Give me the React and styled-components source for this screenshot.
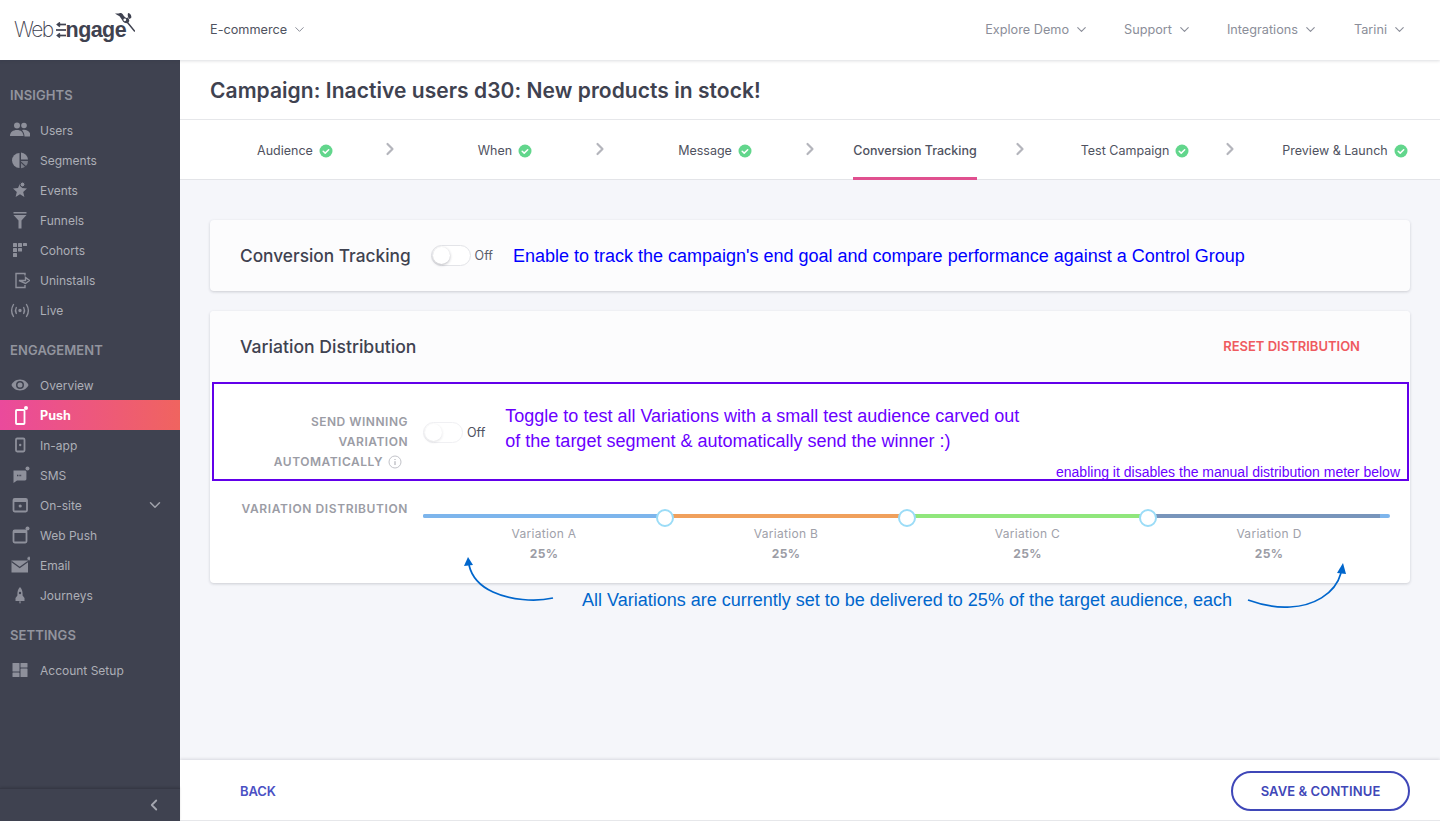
import React from "react";
import styled, { createGlobalStyle } from "styled-components";
import { ChevronDown, ChevronRight, ChevronLeft } from "lucide-react";

const Global = createGlobalStyle`
  html, body { margin: 0; padding: 0; height: 100%; }
  body { font-family: Inter, "Noto Sans", "Liberation Sans", sans-serif; background: #f5f6fa; overflow: hidden; }
  * { box-sizing: border-box; }
`;

const Page = styled.div`
  width: 1440px; height: 821px; display: grid;
  grid-template-rows: 60px 1fr; grid-template-columns: 180px 1fr; overflow: hidden;
`;
const TopBar = styled.header`
  grid-column: 1 / 3; display: flex; align-items: center; background: #fff;
  padding: 0 33px 2px 0; box-shadow: 0 1px 3px rgba(40, 44, 60, 0.16); position: relative; z-index: 2;
`;
const Logo = styled.div`
  width: 210px; display: flex; align-items: baseline; padding: 18px 0 0 14px; height: 58px; position: relative; color: #3f4250;
`;
const LogoThin = styled.span`
  font-family: Inter, sans-serif; font-size: 21px; font-weight: 200; letter-spacing: -1.6px; line-height: 24px; color: #3f4250;
`;
const LogoBold = styled.span`
  font-family: "Liberation Sans", sans-serif; font-size: 21.5px; font-weight: 700; letter-spacing: -0.55px; line-height: 24px;
`;
const LogoMark = styled.svg`
  width: 10px; height: 16px; align-self: flex-start; margin: 4px 0 0 3px; flex: none;
`;
const Bird = styled.svg`
  position: absolute; left: 115px; top: 12px; width: 20px; height: 20px;
`;
const MenuButton = styled.div`
  display: flex; align-items: center; gap: 5px; font-size: 12.7px; letter-spacing: 0;
  color: ${p => (p.$dark ? "#4f5260" : "#8b8e99")};
  margin-left: ${p => p.$gap || 0}px;
`;
const Spacer = styled.div` flex: 1; `;

const Side = styled.aside`
  background: #3f4250; display: flex; flex-direction: column; padding-top: 20px; position: relative;
`;
const SideLabel = styled.div`
  font-size: 13px; font-weight: 600; color: #92949e; letter-spacing: 0.1px; line-height: 30px;
  padding-left: 10px; margin: ${p => (p.$first ? "0" : "10px")} 0 5px;
`;
const SideRow = styled.div`
  height: 30px; display: flex; align-items: center; gap: 10px; padding: 0 16px 0 10px;
  font-size: ${p => (p.$active ? "12.6px" : "12px")}; color: ${p => (p.$active ? "#fff" : "#adafb7")}; font-weight: ${p => (p.$active ? 700 : 400)};
  background: ${p => (p.$active ? "linear-gradient(90deg, #ea4a9c, #f0645f)" : "none")};
`;
const SideIcon = styled.svg`
  width: 20px; height: 20px; flex: none; color: ${p => (p.$active ? "#fff" : "#8e909b")};
`;
const SideText = styled.span` flex: 1; `;
const Collapse = styled.div`
  margin-top: auto; height: 33px; border-top: 1px solid #363845; box-shadow: 0 -1px 2px rgba(0,0,0,.12);
  display: flex; align-items: center; justify-content: flex-end; padding-right: 17px; color: #a4a6af;
`;

const Main = styled.main` display: flex; flex-direction: column; min-width: 0; min-height: 0; background: #f5f6fa; `;
const TitleBar = styled.div`
  height: 60px; flex: none; background: #fff; padding: 1px 0 0 30px; display: flex; align-items: center;
  border-bottom: 1px solid #e6e7ea;
`;
const Title = styled.h1` margin: 0; font-size: 21px; font-weight: 600; color: #3f4250; letter-spacing: 0.05px; `;
const Steps = styled.nav`
  height: 60px; flex: none; background: #fff; display: grid; grid-template-columns: repeat(6, 210px);
  border-bottom: 1px solid #e3e4e8;
`;
const Step = styled.div`
  position: relative; display: flex; align-items: center; justify-content: center; font-size: 12.5px; color: #4f5260;
`;
const StepLabel = styled.span`
  position: relative; height: 60px; line-height: 61px; white-space: nowrap;
  font-weight: ${p => (p.$active ? 500 : 400)};
  border-bottom: ${p => (p.$active ? "3px solid #e0508f" : "0")};
`;
const Check = styled.svg`
  position: absolute; left: calc(100% + 6px); top: 24px; width: 14px; height: 14px;
`;
const StepArrow = styled(ChevronRight)`
  position: absolute; right: -10px; top: 19px; color: #b4b5bc;
`;
const Content = styled.div`
  flex: 1; padding: 40px 30px 0; display: flex; flex-direction: column; gap: 20px; min-height: 0;
`;
const Card = styled.section`
  background: ${p => (p.$tint ? "#fcfcfd" : "#fff")}; border-radius: 4px; box-shadow: 0 1px 3px rgba(40, 44, 60, 0.2);
`;
const TrackingCard = styled(Card)`
  height: 71px; display: flex; align-items: center; padding-left: 30px;
`;
const CardTitle = styled.h2` margin: 0; font-size: 17.3px; font-weight: 500; color: #3f4250; letter-spacing: 0; `;
const SectionTitle = styled(CardTitle)` font-size: 17.6px; `;
const Toggle = styled.div`
  width: 40px; height: 21px; border-radius: 11px; border: 1px solid ${p => (p.$pale ? "#f0f0f3" : "#e3e4e8")}; background: #fff; position: relative; flex: none;
  margin-left: ${p => p.$ml || 0}px;
  &::before {
    content: ""; position: absolute; left: 1px; top: 1px; width: 17px; height: 17px; border-radius: 50%;
    background: #fff; box-shadow: 0 1px 3px rgba(30, 30, 50, ${p => (p.$pale ? 0.14 : 0.32)});
  }
`;
const OffText = styled.span` font-size: 12.5px; color: ${p => p.$c || "#5b5e6b"}; margin-left: ${p => p.$ml || 4}px; `;
const BlueNote = styled.span`
  font-family: "Liberation Sans", Arial, sans-serif; font-size: 18px; color: #0000ff; margin: 1px 0 0 20px; white-space: nowrap;
`;
const HeaderRow = styled.div`
  height: 71px; display: flex; align-items: center; justify-content: space-between; padding: 0 50px 0 30px; background: #fcfcfd; border-radius: 4px 4px 0 0;
`;
const Reset = styled.span` font-size: 13px; font-weight: 600; color: #ef5a5f; letter-spacing: 0; margin-bottom: 2px; `;
const WinnerBox = styled.div`
  position: relative; height: 99px; margin: 0 1px 0 2px; border: 2px solid #6200ea;
  display: flex; align-items: flex-start; padding-top: 28px;
`;
const FieldLabel = styled.div`
  width: 194px; flex: none; text-align: right; font-size: 12px; font-weight: 600; letter-spacing: 0.5px; line-height: 20px; color: #9b9ca5; text-transform: uppercase; white-space: nowrap;
`;
const InfoIcon = styled.svg` width: 14px; height: 14px; vertical-align: -3px; margin: 0 6px 0 5px; `;
const WinnerToggle = styled.div` display: flex; align-items: center; margin: 10px 0 0 15px; height: 21px; `;
const PurpleNote = styled.div`
  font-family: "Liberation Sans", Arial, sans-serif; font-size: 18px; line-height: 25px; color: #6a00ff; width: 530px; margin: -8px 0 0 20px;
`;
const PurpleSmall = styled.div`
  position: absolute; right: 7px; bottom: -1px; font-family: "Liberation Sans", Arial, sans-serif; font-size: 14px; line-height: 16px; color: #6a00ff;
`;
const SliderRow = styled.div`
  height: 102px; display: flex; padding: 18px 20px 0 30px;
`;
const SliderLabel = styled(FieldLabel)` width: 168px; letter-spacing: 0.6px; `;
const SliderCol = styled.div` flex: 1; margin-left: 15px; padding-top: 15px; `;
const Track = styled.div`
  height: 4px; border-radius: 2px; background: #7db5ec; display: grid; grid-template-columns: 242px 242px 241px 232px;
  width: 967px;
`;
const Segment = styled.div`
  height: 4px; position: relative; background: ${p => p.$c}; border-radius: 2px 0 0 2px;
  ${p => p.$handle && `&::after {
    content: ""; position: absolute; right: -9px; top: -5px; width: 14px; height: 14px; border-radius: 50%;
    background: #fff; border: 2px solid #9bdcf7; z-index: 1;
  }`}
`;
const SegmentLabels = styled.div`
  display: grid; grid-template-columns: 242px 242px 241px 242px; margin-top: 6px; text-align: center; color: #a0a1aa; font-size: 12px; line-height: 20px; letter-spacing: 0.3px;
`;
const Percent = styled.div` font-weight: 700; color: #9b9ca5; `;
const BottomNote = styled.div`
  position: relative; margin-top: 6px; font-family: "Liberation Sans", Arial, sans-serif; font-size: 18px; line-height: 22px; color: #0066cc; padding-left: 372px;
`;
const ArrowSvg = styled.svg` position: absolute; overflow: visible; left: ${p => p.$x}px; top: ${p => p.$y}px; `;
const Footer = styled.footer`
  height: 61px; flex: none; background: #fff; display: flex; align-items: center; justify-content: space-between;
  padding: 1px 30px 0 60px; box-shadow: 0 -1px 3px rgba(40, 44, 60, 0.14); border-bottom: 1px solid #e6e7ea;
`;
const BackLink = styled.span` font-size: 13px; font-weight: 600; color: #4a50c4; letter-spacing: -0.1px; `;
const SaveButton = styled.button`
  width: 179px; height: 40px; border-radius: 20px; border: 2px solid #3f47b8; background: #fff; color: #3f47b8;
  font: 600 13px Inter, sans-serif; letter-spacing: 0.1px;
`;

const I = {
  users: <><circle cx="7" cy="5.5" r="3" fill="currentColor"/><circle cx="14" cy="5.5" r="2.8" fill="currentColor"/><path d="M0 16c0-4 3-6 7-6s6 2 6.500 6z" fill="currentColor"/><path d="M12 10c4-1 8 1 8.500 5 0 1-.5 1.500-1.500 1.500h-4.500c0-2.500-1-4.500-2.500-6.500z" fill="currentColor"/></>,
  segments: <><path d="M9.500 3a7.500 7.500 0 0 0 0 15z" fill="currentColor"/><path d="M11 2.500a7.500 7.500 0 0 1 7 7h-7z" fill="currentColor"/><path d="M11 11h7a7.500 7.500 0 0 1-2 5l-5-4.500z" fill="currentColor" opacity=".75"/><path d="M11 13l4 3.800a7.500 7.500 0 0 1-4 1.400z" fill="currentColor" opacity=".75"/></>,
  star: <><path d="M10 3.500l2 4.500 5 .5-3.800 3.400 1.200 5-4.400-2.700-4.400 2.700 1.200-5L3 8.500l5-.5z" fill="currentColor"/><circle cx="12.500" cy="4.500" r="2.400" fill="currentColor" stroke="#3f4250"/></>,
  funnel: <><path d="M3.500 2h13v1.500h-13z" fill="currentColor"/><path d="M3.500 5h13l-5 5.500v8h-3v-8z" fill="currentColor"/></>,
  cohorts: <g fill="currentColor"><rect x="3" y="3" width="4" height="4" rx=".6"/><rect x="8" y="3" width="4" height="4" rx=".6"/><rect x="13" y="3" width="4" height="3" rx=".6"/><rect x="3" y="8" width="4" height="4" rx=".6"/><rect x="8" y="8" width="4" height="3.500" rx=".6"/><rect x="3" y="13" width="4" height="4" rx=".6"/></g>,
  uninstall: <g fill="none" stroke="currentColor" strokeWidth="1.400"><path d="M15 5.500V3.500H6v14h9V15"/><path d="M9 10.500h6.500V7.500l4 3-4 3z"/></g>,
  live: <g fill="none" stroke="currentColor" strokeWidth="1.400" strokeLinecap="round"><path d="M3.500 4.500c-2.500 4-2.500 8 0 12"/><path d="M6.300 7.500c-1.100 2-1.100 4 0 6"/><path d="M16.500 4.500c2.500 4 2.500 8 0 12"/><path d="M13.700 7.500c1.100 2 1.100 4 0 6"/><circle cx="10" cy="10.500" r="1" fill="currentColor"/></g>,
  eye: <path fillRule="evenodd" d="M10 4.500c4.500 0 7.500 3 8.500 5.500-1 2.500-4 5.500-8.500 5.500S2.500 12.500 1.500 10C2.500 7.500 5.500 4.500 10 4.500zM10 6a4 4 0 1 0 0 8 4 4 0 0 0 0-8zM10 7.500a2.500 2.500 0 1 1 0 5 2.500 2.500 0 0 1 0-5z" fill="currentColor"/>,
  push: <><rect x="6" y="5" width="8.500" height="14" rx=".8" fill="none" stroke="currentColor" strokeWidth="1.800"/><circle cx="16" cy="3" r="2" fill="currentColor"/></>,
  inapp: <><rect x="6" y="3.500" width="8.500" height="13" rx="1.200" fill="none" stroke="currentColor" strokeWidth="1.800"/><circle cx="10.200" cy="10" r="1.200" fill="currentColor"/></>,
  sms: <><path d="M3.500 5.500h11.500c.8 0 1.400.6 1.400 1.400v7.100c0 .8-.6 1.400-1.400 1.400H7l-3.500 2.600z" fill="currentColor"/><path d="M7 10.500h5" stroke="#3f4250" strokeWidth="1.400" strokeDasharray="1.400 1"/><circle cx="17.500" cy="3.500" r="2" fill="currentColor"/></>,
  onsite: <><rect x="3.500" y="4" width="13.500" height="12.500" rx="1.200" fill="none" stroke="currentColor" strokeWidth="1.800"/><path d="M3.500 5h13.500v2H3.500z" fill="currentColor"/><circle cx="10.200" cy="11" r="1.600" fill="currentColor"/></>,
  web: <><rect x="3.500" y="5.500" width="13" height="12" rx="1.200" fill="none" stroke="currentColor" strokeWidth="1.800"/><path d="M3.500 6h13v2h-13z" fill="currentColor"/><circle cx="17.500" cy="3.500" r="2" fill="currentColor"/></>,
  mail: <><path d="M1.500 5.500h16.500v12H1.500z" fill="currentColor"/><path d="M1.500 6.500l8.200 6 8.300-6" fill="none" stroke="#3f4250" strokeWidth="1.300"/><circle cx="19" cy="3.500" r="1.900" fill="currentColor" stroke="#3f4250" strokeWidth=".5"/></>,
  rocket: <g fill="currentColor"><path d="M10 2c2.200 2 2.800 5 2.600 8.500l1.900 2.500v3h-9v-3l1.900-2.500C7.200 7 7.800 4 10 2z"/><path d="M9 16.500h2l-1 2.500z"/><circle cx="10" cy="8" r="1.200" fill="#3f4250"/></g>,
  setup: <g fill="currentColor"><rect x="2.500" y="3" width="7" height="8.500" rx=".6"/><rect x="10.500" y="3" width="7" height="4.500" rx=".6"/><rect x="2.500" y="12.500" width="7" height="4.500" rx=".6"/><rect x="10.500" y="8.500" width="7" height="8.500" rx=".6"/></g>,
};

const Row = ({ icon, label, active, extra }) => (
  <SideRow $active={active}>
    <SideIcon viewBox="0 0 20 20" $active={active}>{I[icon]}</SideIcon>
    <SideText>{label}</SideText>
    {extra}
  </SideRow>
);

const CheckIcon = () => (
  <Check viewBox="0 0 14 14">
    <circle cx="7" cy="7" r="6.500" fill="#62d68c" />
    <path d="M4.200 7.300l2 1.800 3.500-3.300" fill="none" stroke="#fff" strokeWidth="1.500" strokeLinecap="round" strokeLinejoin="round" />
  </Check>
);

const steps = [
  ["Audience", true], ["When", true], ["Message", true],
  ["Conversion Tracking", false, true], ["Test Campaign", true], ["Preview & Launch", true],
];

export default function App() {
  return (
    <Page>
      <Global />
      <TopBar>
        <Logo>
          <LogoThin>Web</LogoThin>
          <LogoMark viewBox="0 0 10 16">
            <g fill="none" stroke="#3f4250" strokeWidth="1.700">
              <path d="M10 2.500H2" /><path d="M10 8H0" /><path d="M10 13.500H2" />
              <path d="M4 .5L1.500 2.500 4 4.500" /><path d="M4 11.500L1.500 13.500 4 15.500" />
            </g>
          </LogoMark>
          <LogoBold>ngage</LogoBold>
          <Bird viewBox="0 0 20 20">
            <path d="M0 1.500l3.400 0C4.600.6 6.800.7 7.800 2.200c1 1.700 2 3 3.500 3.800l1.500-.6 1.200 2.200c.6 1.200.2 2.500-1 3.200-1.600.8-3.500.4-4.800-1C7 8 6 6 4.500 4.200 3 3.200 1.500 2.600 0 1.500z" fill="#3f4250" />
            <path d="M13 1c2.500.4 3.800 2.300 3.200 5L14 7C12.800 5 12.400 3 13 1z" fill="#3f4250" />
            <circle cx="9.800" cy="7.800" r="1.400" fill="#fff" />
            <path d="M12.500 10.500l7 8.500" stroke="#3f4250" strokeWidth="1.500" strokeLinecap="round" />
          </Bird>
        </Logo>
        <MenuButton $dark>E-commerce <ChevronDown size={15} strokeWidth={1.6} color="#8b8e99" /></MenuButton>
        <Spacer />
        <MenuButton>Explore Demo <ChevronDown size={15} strokeWidth={1.8} /></MenuButton>
        <MenuButton $gap={35}>Support <ChevronDown size={15} strokeWidth={1.8} /></MenuButton>
        <MenuButton $gap={35}>Integrations <ChevronDown size={15} strokeWidth={1.8} /></MenuButton>
        <MenuButton $gap={36}>Tarini <ChevronDown size={15} strokeWidth={1.8} /></MenuButton>
      </TopBar>
      <Side>
        <SideLabel $first>INSIGHTS</SideLabel>
        <Row icon="users" label="Users" />
        <Row icon="segments" label="Segments" />
        <Row icon="star" label="Events" />
        <Row icon="funnel" label="Funnels" />
        <Row icon="cohorts" label="Cohorts" />
        <Row icon="uninstall" label="Uninstalls" />
        <Row icon="live" label="Live" />
        <SideLabel>ENGAGEMENT</SideLabel>
        <Row icon="eye" label="Overview" />
        <Row icon="push" label="Push" active />
        <Row icon="inapp" label="In-app" />
        <Row icon="sms" label="SMS" />
        <Row icon="onsite" label="On-site" extra={<ChevronDown size={18} strokeWidth={2} color="#a0a2ab" />} />
        <Row icon="web" label="Web Push" />
        <Row icon="mail" label="Email" />
        <Row icon="rocket" label="Journeys" />
        <SideLabel>SETTINGS</SideLabel>
        <Row icon="setup" label="Account Setup" />
        <Collapse><ChevronLeft size={18} strokeWidth={2.4} /></Collapse>
      </Side>
      <Main>
        <TitleBar><Title>Campaign: Inactive users d30: New products in stock!</Title></TitleBar>
        <Steps>
          {steps.map(([label, done, active], i) => (
            <Step key={label}>
              <StepLabel $active={active}>{label}{done && <CheckIcon />}</StepLabel>
              {i < 5 && <StepArrow size={20} strokeWidth={2.6} />}
            </Step>
          ))}
        </Steps>
        <Content>
          <TrackingCard $tint>
            <CardTitle>Conversion Tracking</CardTitle>
            <Toggle $ml={20} />
            <OffText>Off</OffText>
            <BlueNote>Enable to track the campaign's end goal and compare performance against a Control Group</BlueNote>
          </TrackingCard>
          <div>
            <Card>
              <HeaderRow>
                <SectionTitle>Variation Distribution</SectionTitle>
                <Reset>RESET DISTRIBUTION</Reset>
              </HeaderRow>
              <WinnerBox>
                <FieldLabel>
                  Send winning<br />variation<br />automatically
                  <InfoIcon viewBox="0 0 14 14">
                    <circle cx="7" cy="7" r="6" fill="none" stroke="#c2c3c9" />
                    <path d="M7 6.200v3.800M7 4v1" stroke="#a5a6ae" strokeWidth="1" />
                  </InfoIcon>
                </FieldLabel>
                <WinnerToggle>
                  <Toggle $pale />
                  <OffText $ml={4} $c="#4f5260">Off</OffText>
                </WinnerToggle>
                <PurpleNote>Toggle to test all Variations with a small test audience carved out of the target segment &amp; automatically send the winner :)</PurpleNote>
                <PurpleSmall>enabling it disables the manual distribution meter below</PurpleSmall>
              </WinnerBox>
              <SliderRow>
                <SliderLabel>Variation distribution</SliderLabel>
                <SliderCol>
                  <Track>
                    <Segment $c="#7db5ec" $handle />
                    <Segment $c="#f0a05c" $handle />
                    <Segment $c="#90e67c" $handle />
                    <Segment $c="#7895bb" />
                  </Track>
                  <SegmentLabels>
                    {["A", "B", "C", "D"].map(v => (
                      <div key={v}>Variation {v}<Percent>25%</Percent></div>
                    ))}
                  </SegmentLabels>
                </SliderCol>
              </SliderRow>
            </Card>
            <BottomNote>
              <ArrowSvg $x={250} $y={-39} width="96" height="56" viewBox="0 0 96 56">
                <path d="M93 48C75 52 50 50 33 42 22 37 12 28 9 15" fill="none" stroke="#0066cc" strokeWidth="1.700" />
                <path d="M8 7l-4 9 9-1z" fill="#0066cc" />
              </ArrowSvg>
              All Variations are currently set to be delivered to 25% of the target audience, each
              <ArrowSvg $x={1037} $y={-29} width="100" height="60" viewBox="0 0 100 60">
                <path d="M1 40C15 45 30 48 43 47 65 46 88 35 94 13" fill="none" stroke="#0066cc" strokeWidth="1.700" />
                <path d="M96 3l-6 10 9 1z" fill="#0066cc" />
              </ArrowSvg>
            </BottomNote>
          </div>
        </Content>
        <Footer>
          <BackLink>BACK</BackLink>
          <SaveButton>SAVE &amp; CONTINUE</SaveButton>
        </Footer>
      </Main>
    </Page>
  );
}
